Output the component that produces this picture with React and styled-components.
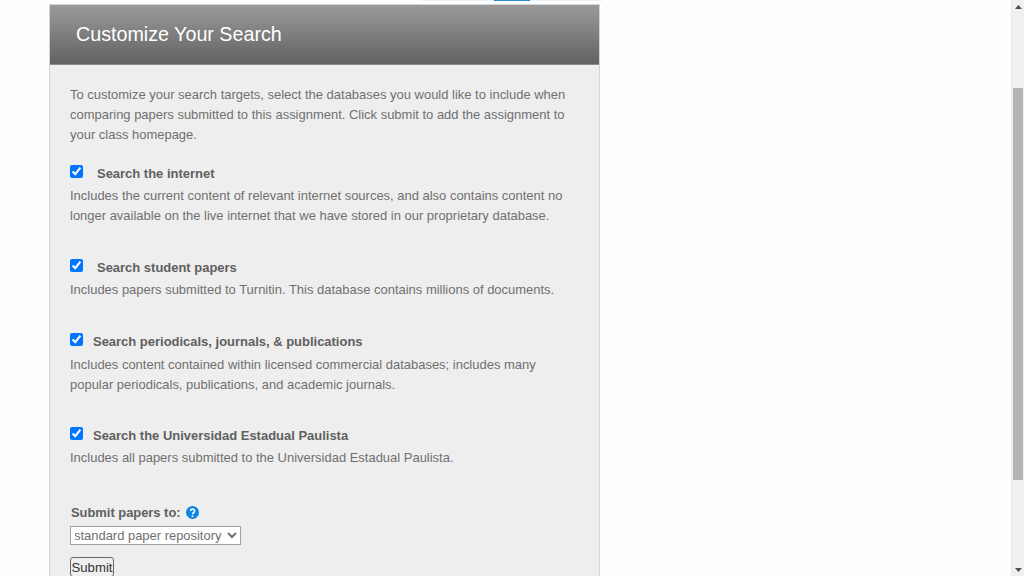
import React from "react";
import styled, { createGlobalStyle } from "styled-components";

const GlobalStyle = createGlobalStyle`
  html, body {
    margin: 0;
    padding: 0;
    overflow: hidden;
    background: #fdfeff;
  }
`;

const Shell = styled.div`
  display: flex;
  width: 1024px;
  height: 576px;
  overflow: hidden;
  font-family: "Liberation Sans", Arial, sans-serif;
`;

const Page = styled.main`
  flex: 1;
  min-width: 0;
  padding-left: 49px;
`;

const TopStrip = styled.div`
  display: flex;
  width: 180px;
  height: 1px;
  margin-left: 373px;
  background: #eef0f2;
`;

const StripActive = styled.span`
  width: 36px;
  margin-left: 72px;
  background: #2a8ccf;
`;

const Card = styled.section`
  box-sizing: border-box;
  width: 551px;
  margin-top: 3px;
  background: #eeeeee;
  border: 1px solid #d4d4d4;
  border-bottom: 0;
`;

const Header = styled.header`
  box-sizing: border-box;
  height: 60px;
  padding: 17px 26px 0;
  background: linear-gradient(#9a9a9a, #626262);
  border-bottom: 1px solid #8c8c8c;
`;

const Title = styled.h1`
  margin: 0;
  font-size: 19.7px;
  line-height: 24px;
  font-weight: 400;
  color: #fff;
`;

const Body = styled.div`
  padding: 20px 20px 40px;
`;

const Text = styled.p`
  margin: 0;
  font-size: 12.97px;
  line-height: 20px;
  color: #707070;
`;

const Group = styled.div`
  margin-top: ${(p) => p.$top}px;
`;

const LabelRow = styled.label`
  display: flex;
  align-items: flex-start;
  height: ${(p) => p.$height}px;
`;

const Check = styled.input`
  width: 13px;
  height: 13px;
  margin: 0 ${(p) => p.$gap}px 0 0;
  flex: none;
  accent-color: #0075ff;
`;

const LabelText = styled.span`
  margin-top: 1px;
  font-size: 12.97px;
  line-height: 15px;
  font-weight: 700;
  color: #606060;
`;

const SubmitLabel = styled.div`
  display: flex;
  align-items: center;
  gap: 5px;
  height: 14px;
  margin-left: 1px;
  font-size: 12.9px;
  font-weight: 700;
  color: #606060;
`;

const HelpIcon = styled.svg`
  width: 13px;
  height: 13px;
  flex: none;
`;

const RepoSelect = styled.select`
  display: block;
  box-sizing: border-box;
  width: 171px;
  height: 19px;
  margin: 7px 0 0;
  padding: 0;
  text-indent: -1px;
  font-family: "Liberation Sans", Arial, sans-serif;
  font-size: 12.95px;
  color: #707070;
  background: #fff;
  border: 1px solid #a0a0a0;
  border-radius: 0;
`;

const SubmitButton = styled.button`
  display: block;
  box-sizing: border-box;
  width: 44px;
  height: 20px;
  margin-top: 12px;
  padding: 0;
  font-family: "Liberation Sans", Arial, sans-serif;
  font-size: 13.2px;
  color: #333;
  background: #efefef;
  border: 1px solid #666;
  border-radius: 3px;
`;

const Scrollbar = styled.aside`
  display: flex;
  flex-direction: column;
  align-items: center;
  flex: none;
  width: 13px;
  height: 576px;
  padding-top: 5px;
  box-sizing: border-box;
  background: #f0f0f0;
  border-left: 1px solid #e8e8e8;
`;

const Arrow = styled.svg`
  width: 7px;
  height: 4px;
  flex: none;
  fill: #505050;
`;

const Thumb = styled.div`
  width: 10px;
  height: 392px;
  margin: 79px 0 88px;
  flex: none;
  background: #b4b4b4;
`;

const searches = [
  {
    label: "Search the internet",
    gap: 14,
    top: 20,
    row: 21,
    text: "Includes the current content of relevant internet sources, and also contains content no longer available on the live internet that we have stored in our proprietary database.",
  },
  {
    label: "Search student papers",
    gap: 14,
    top: 33,
    row: 21,
    text: "Includes papers submitted to Turnitin. This database contains millions of documents.",
  },
  {
    label: "Search periodicals, journals, & publications",
    gap: 10,
    top: 33,
    row: 22,
    text: "Includes content contained within licensed commercial databases; includes many popular periodicals, publications, and academic journals.",
  },
  {
    label: "Search the Universidad Estadual Paulista",
    gap: 10,
    top: 32,
    row: 21,
    text: "Includes all papers submitted to the Universidad Estadual Paulista.",
  },
];

export default function App() {
  return (
    <>
      <GlobalStyle />
      <Shell>
        <Page>
          <TopStrip>
            <StripActive />
          </TopStrip>
          <Card>
            <Header>
              <Title>Customize Your Search</Title>
            </Header>
            <Body>
              <Text>
                To customize your search targets, select the databases you would like to include when
                comparing papers submitted to this assignment. Click submit to add the assignment to
                your class homepage.
              </Text>
              {searches.map((item) => (
                <Group key={item.label} $top={item.top}>
                  <LabelRow $height={item.row}>
                    <Check type="checkbox" defaultChecked $gap={item.gap} />
                    <LabelText>{item.label}</LabelText>
                  </LabelRow>
                  <Text>{item.text}</Text>
                </Group>
              ))}
              <Group $top={37}>
                <SubmitLabel>
                  Submit papers to:
                  <HelpIcon viewBox="0 0 13 13">
                    <circle cx="6.5" cy="6.5" r="6.5" fill="#0b84e3" />
                    <path
                      d="M4.5 5.1a2 2 0 1 1 3 1.7c-.7.4-1 .7-1 1.4"
                      fill="none"
                      stroke="#fff"
                      strokeWidth="1.6"
                    />
                    <circle cx="6.5" cy="10.2" r="1" fill="#fff" />
                  </HelpIcon>
                </SubmitLabel>
                <RepoSelect defaultValue="standard">
                  <option value="standard">standard paper repository</option>
                </RepoSelect>
                <SubmitButton type="button">Submit</SubmitButton>
              </Group>
            </Body>
          </Card>
        </Page>
        <Scrollbar>
          <Arrow viewBox="0 0 7 4">
            <path d="M3.5 0L7 4H0z" />
          </Arrow>
          <Thumb />
          <Arrow viewBox="0 0 7 4">
            <path d="M0 0h7L3.5 4z" />
          </Arrow>
        </Scrollbar>
      </Shell>
    </>
  );
}
